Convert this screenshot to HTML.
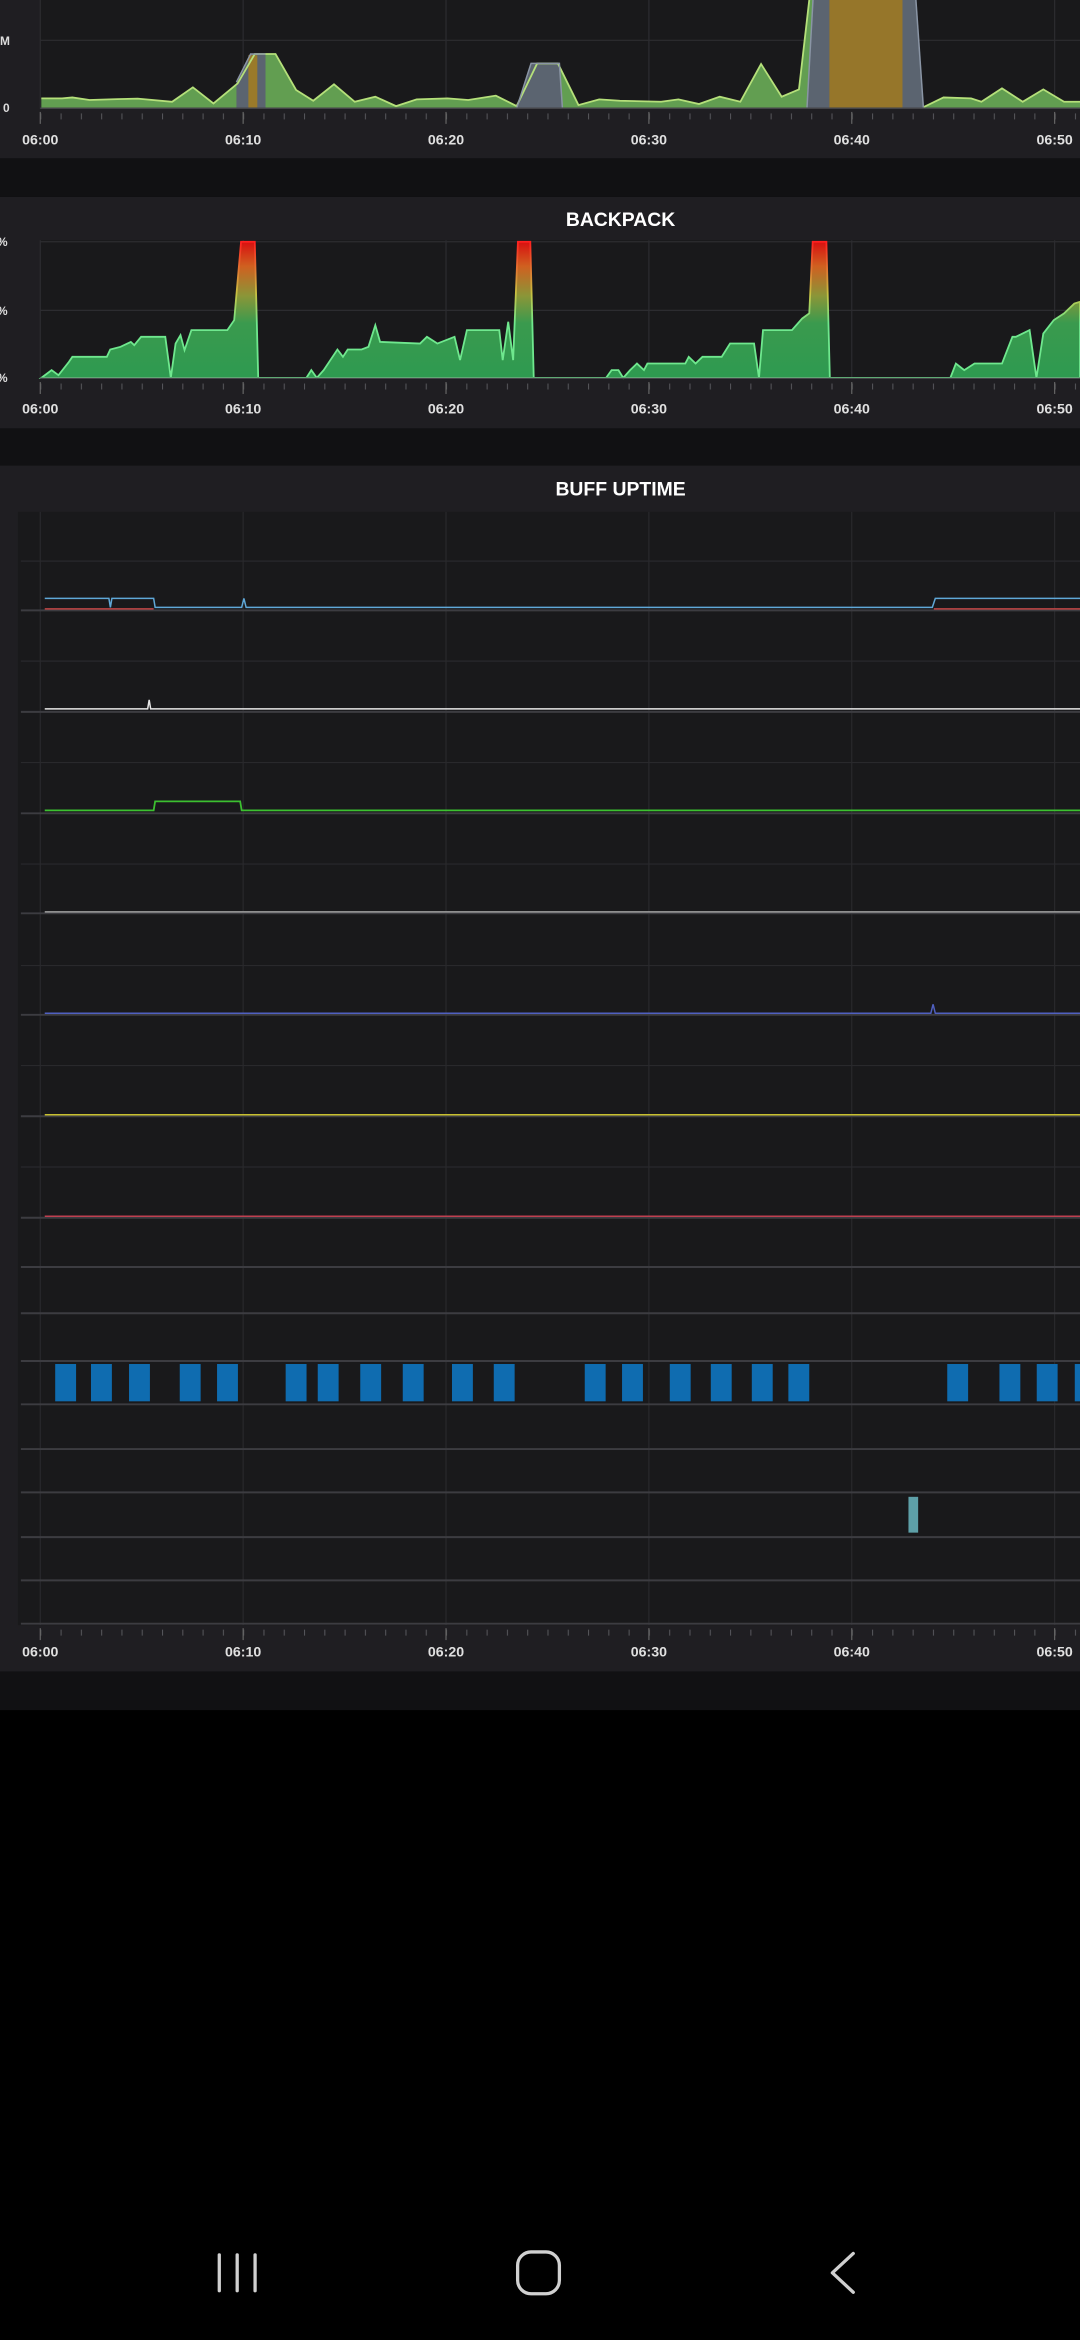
<!DOCTYPE html>
<html><head><meta charset="utf-8"><style>
html,body{margin:0;padding:0;background:#000;width:1080px;height:2340px;overflow:hidden}
svg{display:block}
text{font-family:"Liberation Sans",sans-serif;font-weight:bold}
</style></head><body>
<svg width="1080" height="2340" viewBox="0 0 724 1568" preserveAspectRatio="none" xmlns="http://www.w3.org/2000/svg">
<defs>
<pattern id="tk" x="27" y="0" width="13.6" height="2000" patternUnits="userSpaceOnUse"><rect x="0" y="0" width="0.7" height="2000" fill="#55555a"/></pattern>
<linearGradient id="bf" gradientUnits="userSpaceOnUse" x1="0" y1="253" x2="0" y2="162">
<stop offset="0" stop-color="#2e9a50"/><stop offset="0.4" stop-color="#3a9a4e"/><stop offset="0.6" stop-color="#8a9638"/><stop offset="0.82" stop-color="#d06020"/><stop offset="1" stop-color="#d81010"/></linearGradient>
<linearGradient id="bl" gradientUnits="userSpaceOnUse" x1="0" y1="253" x2="0" y2="162">
<stop offset="0" stop-color="#6fe88e"/><stop offset="0.4" stop-color="#6fe88e"/><stop offset="0.62" stop-color="#c8c040"/><stop offset="1" stop-color="#ff2020"/></linearGradient>
</defs>
<rect x="0" y="0" width="724" height="1568" fill="#000"/>
<rect x="0" y="0" width="724" height="1146" fill="#111113"/>
<!-- top panel -->
<rect x="0" y="0" width="724" height="106" fill="#1f1e22"/>
<rect x="27" y="0" width="697" height="73" fill="#19191b"/>
<g stroke="#2c2c30" stroke-width="0.8">
<line x1="27" y1="27" x2="724" y2="27"/>
<line x1="27" y1="0" x2="27" y2="73"/><line x1="163" y1="0" x2="163" y2="73"/><line x1="299" y1="0" x2="299" y2="73"/><line x1="435" y1="0" x2="435" y2="73"/><line x1="571" y1="0" x2="571" y2="73"/><line x1="707" y1="0" x2="707" y2="73"/>
</g>
<polygon fill="#629e51" points="27.7,72 27.7,65.9 41.6,65.9 48.5,65.3 60,67 78.5,66.4 92.3,66.1 115.4,68.2 129.3,58.5 143.1,69.3 159.3,55.9 170.8,36.2 184.7,36.2 198.5,60.3 210,67.5 223.9,56.5 237.8,68.2 251.6,64.8 265.5,71.1 279.3,66.6 300,65.9 313.9,67 332.4,64.1 346.3,71.1 360.1,42.5 374,42.5 387.8,70.4 401.7,66.6 415.5,67.5 443.2,68.2 454.8,66.6 468.6,69.7 482.5,64.8 496.3,68.2 510.2,42.9 524,64.8 535.6,59.9 542.5,0 604.8,0 618.7,72 632.5,65.3 651,65.9 657.9,68.2 671.7,59.2 685.6,68.2 699.4,59.9 713.3,68.2 724,68.2 724,72"/>
<polygon fill="#5b6470" points="158.5,72 158.5,55 168,36.2 178,36.2 178,72"/>
<rect x="166.5" y="37" width="6" height="35" fill="#9a7a2a"/>
<polygon fill="#5b6470" points="346.5,72 356,42.5 375,42.5 377,72"/>
<polygon fill="#5b6470" points="541,72 545,0 614,0 619,72"/>
<rect x="556" y="0" width="49" height="72" fill="#96762a"/>
<polyline fill="none" stroke="#b5e07a" stroke-width="1.2" points="27.7,65.9 41.6,65.9 48.5,65.3 60,67 78.5,66.4 92.3,66.1 115.4,68.2 129.3,58.5 143.1,69.3 159.3,55.9 170.8,36.2 184.7,36.2 198.5,60.3 210,67.5 223.9,56.5 237.8,68.2 251.6,64.8 265.5,71.1 279.3,66.6 300,65.9 313.9,67 332.4,64.1 346.3,71.1 360.1,42.5 374,42.5 387.8,70.4 401.7,66.6 415.5,67.5 443.2,68.2 454.8,66.6 468.6,69.7 482.5,64.8 496.3,68.2 510.2,42.9 524,64.8 535.6,59.9 542.5,0"/>
<polyline fill="none" stroke="#b5e07a" stroke-width="1.2" points="618.7,72 632.5,65.3 651,65.9 657.9,68.2 671.7,59.2 685.6,68.2 699.4,59.9 713.3,68.2 724,68.2"/>
<polyline fill="none" stroke="#8a95a5" stroke-width="1" points="158.5,55 168,36.2 178,36.2"/>
<polyline fill="none" stroke="#8a95a5" stroke-width="1" points="346.5,72 356,42.5 375,42.5 377,72"/>
<polyline fill="none" stroke="#8a95a5" stroke-width="1" points="541,72 545,0"/><polyline fill="none" stroke="#8a95a5" stroke-width="1" points="614,0 619,72"/>
<line x1="27" y1="72.5" x2="724" y2="72.5" stroke="#444448" stroke-width="1"/>
<rect x="27" y="76" width="697" height="4" fill="url(#tk)"/>
<g stroke="#666" stroke-width="0.8"><line x1="27" y1="75" x2="27" y2="83"/><line x1="163" y1="75" x2="163" y2="83"/><line x1="299" y1="75" x2="299" y2="83"/><line x1="435" y1="75" x2="435" y2="83"/><line x1="571" y1="75" x2="571" y2="83"/><line x1="707" y1="75" x2="707" y2="83"/></g>
<text x="0" y="30" font-size="8" fill="#ddd">M</text>
<text x="2" y="75" font-size="8" fill="#ddd">0</text>
<g font-size="9.5" fill="#e0e0e0" text-anchor="middle"><text x="27" y="97">06:00</text><text x="163" y="97">06:10</text><text x="299" y="97">06:20</text><text x="435" y="97">06:30</text><text x="571" y="97">06:40</text><text x="707" y="97">06:50</text></g>
<!-- backpack -->
<rect x="0" y="132" width="724" height="155" fill="#1f1e22"/>
<rect x="27" y="161" width="697" height="93" fill="#19191b"/>
<text x="416" y="151.5" font-size="13" fill="#fff" text-anchor="middle">BACKPACK</text>
<g stroke="#2c2c30" stroke-width="0.8">
<line x1="27" y1="162" x2="724" y2="162"/><line x1="27" y1="208" x2="724" y2="208"/>
<line x1="27" y1="161" x2="27" y2="254"/><line x1="163" y1="161" x2="163" y2="254"/><line x1="299" y1="161" x2="299" y2="254"/><line x1="435" y1="161" x2="435" y2="254"/><line x1="571" y1="161" x2="571" y2="254"/><line x1="707" y1="161" x2="707" y2="254"/>
</g>
<polygon fill="url(#bf)" stroke="url(#bl)" stroke-width="1.2" points="27.7,253.2 34.6,248 39.2,251.4 46.2,242.5 48.5,239.1 71.6,239.1 73.9,234.2 80.8,232.4 87.7,229.1 90,231.3 94.6,225.7 110.8,225.7 114.5,253.2 117.7,230.2 121,224.6 123.7,234.6 128.3,221.2 152.4,221.2 157,214.5 161.6,162 170.8,162 173.1,253.2 205.4,253.2 208.7,248 212.4,253.2 217,248 226.2,234.2 229.9,239.1 233.1,234.2 242.4,234.2 247,232.4 251.6,217.9 254.8,229.1 281.6,230.2 286.2,225.7 293.2,230.2 304.7,225.7 308.4,241.3 313,221.2 334.7,221.2 337,241.3 340.7,215.6 344,241.3 347.2,162 355.5,162 357.8,253.2 406.3,253.2 410,248 414.6,248 417.8,253.2 422.4,248 427,243.6 431.7,248 434,243.6 459.4,243.6 461.7,239.1 466.3,243.6 470.9,239.1 483.8,239.1 489.4,230.2 505.5,230.2 508.8,253.2 511.5,221.2 530.9,221.2 537.8,213.4 542.5,210 544.8,162 554,162 556.3,253.2 637.1,253.2 640.8,243.6 646.4,248 653.3,243.6 671.7,243.6 678.7,225.7 681,225.7 690.2,221.2 694.8,253.2 699.4,223.5 706.4,214.5 713.3,210 720.2,203.4 724,202.2 724,253.2"/>
<line x1="27" y1="253.5" x2="724" y2="253.5" stroke="#444448" stroke-width="1"/>
<rect x="27" y="257" width="697" height="4" fill="url(#tk)"/>
<g stroke="#666" stroke-width="0.8"><line x1="27" y1="256" x2="27" y2="264"/><line x1="163" y1="256" x2="163" y2="264"/><line x1="299" y1="256" x2="299" y2="264"/><line x1="435" y1="256" x2="435" y2="264"/><line x1="571" y1="256" x2="571" y2="264"/><line x1="707" y1="256" x2="707" y2="264"/></g>
<g font-size="8" fill="#ddd"><text x="-2" y="165">%</text><text x="-2" y="211">%</text><text x="-2" y="256">%</text></g>
<g font-size="9.5" fill="#e0e0e0" text-anchor="middle"><text x="27" y="277">06:00</text><text x="163" y="277">06:10</text><text x="299" y="277">06:20</text><text x="435" y="277">06:30</text><text x="571" y="277">06:40</text><text x="707" y="277">06:50</text></g>
<!-- buff uptime -->
<rect x="0" y="312" width="724" height="808" fill="#1f1e22"/>
<rect x="12" y="343" width="712" height="746" fill="#19191b"/>
<text x="416" y="332" font-size="13" fill="#fff" text-anchor="middle">BUFF UPTIME</text>
<g stroke="#29292c" stroke-width="0.8">
<line x1="27" y1="343" x2="27" y2="1089"/><line x1="163" y1="343" x2="163" y2="1089"/><line x1="299" y1="343" x2="299" y2="1089"/><line x1="435" y1="343" x2="435" y2="1089"/><line x1="571" y1="343" x2="571" y2="1089"/><line x1="707" y1="343" x2="707" y2="1089"/>
<line x1="14" y1="376" x2="724" y2="376"/><line x1="14" y1="443" x2="724" y2="443"/><line x1="14" y1="511" x2="724" y2="511"/><line x1="14" y1="579" x2="724" y2="579"/><line x1="14" y1="647" x2="724" y2="647"/><line x1="14" y1="714" x2="724" y2="714"/><line x1="14" y1="782" x2="724" y2="782"/>
</g>
<g stroke="#3c3c41" stroke-width="1.3">
<line x1="14" y1="409" x2="724" y2="409"/><line x1="14" y1="477" x2="724" y2="477"/><line x1="14" y1="545" x2="724" y2="545"/><line x1="14" y1="612" x2="724" y2="612"/><line x1="14" y1="680" x2="724" y2="680"/><line x1="14" y1="748" x2="724" y2="748"/><line x1="14" y1="816" x2="724" y2="816"/><line x1="14" y1="849" x2="724" y2="849"/><line x1="14" y1="880" x2="724" y2="880"/><line x1="14" y1="912" x2="724" y2="912"/><line x1="14" y1="941" x2="724" y2="941"/><line x1="14" y1="971" x2="724" y2="971"/><line x1="14" y1="1000" x2="724" y2="1000"/><line x1="14" y1="1030" x2="724" y2="1030"/><line x1="14" y1="1059" x2="724" y2="1059"/><line x1="14" y1="1088" x2="724" y2="1088"/>
</g>
<g fill="none" stroke-width="1">
<polyline stroke="#c04545" points="30,408 103,408"/><polyline stroke="#c04545" points="626,408 724,408"/>
<polyline stroke="#5fa8d8" points="30,401 73,401 74,407 75,401 103,401 104,407 162,407 163.5,401 165,407 625,407 627,401 724,401"/>
<polyline stroke="#e6e6e6" points="30,475 99,475 100,469 101,475 724,475"/>
<polyline stroke="#3cc030" stroke-width="1.2" points="30,543 103,543 104,537 161,537 162,543 724,543"/>
<polyline stroke="#a0a0a0" points="30,611 724,611"/>
<polyline stroke="#5060c0" points="30,679 624,679 625.5,673 627,679 724,679"/>
<polyline stroke="#c8c030" points="30,747 724,747"/>
<polyline stroke="#c04050" points="30,815 724,815"/>
</g>
<g fill="#0f6cb0">
<rect x="37" y="914" width="14" height="25"/><rect x="61" y="914" width="14" height="25"/><rect x="86.5" y="914" width="14" height="25"/><rect x="120.5" y="914" width="14" height="25"/><rect x="145.5" y="914" width="14" height="25"/><rect x="191.5" y="914" width="14" height="25"/><rect x="213" y="914" width="14" height="25"/><rect x="241.5" y="914" width="14" height="25"/><rect x="270" y="914" width="14" height="25"/><rect x="303" y="914" width="14" height="25"/><rect x="331" y="914" width="14" height="25"/><rect x="392" y="914" width="14" height="25"/><rect x="417" y="914" width="14" height="25"/><rect x="449" y="914" width="14" height="25"/><rect x="476.5" y="914" width="14" height="25"/><rect x="504" y="914" width="14" height="25"/><rect x="528.5" y="914" width="14" height="25"/><rect x="635" y="914" width="14" height="25"/><rect x="670" y="914" width="14" height="25"/><rect x="695" y="914" width="14" height="25"/><rect x="720.5" y="914" width="14" height="25"/>
</g>
<rect x="609" y="1003" width="6.5" height="24" fill="#5ea0a8"/>
<rect x="27" y="1092" width="697" height="4" fill="url(#tk)"/>
<g stroke="#666" stroke-width="0.8"><line x1="27" y1="1091" x2="27" y2="1099"/><line x1="163" y1="1091" x2="163" y2="1099"/><line x1="299" y1="1091" x2="299" y2="1099"/><line x1="435" y1="1091" x2="435" y2="1099"/><line x1="571" y1="1091" x2="571" y2="1099"/><line x1="707" y1="1091" x2="707" y2="1099"/></g>
<g font-size="9.5" fill="#e0e0e0" text-anchor="middle"><text x="27" y="1110">06:00</text><text x="163" y="1110">06:10</text><text x="299" y="1110">06:20</text><text x="435" y="1110">06:30</text><text x="571" y="1110">06:40</text><text x="707" y="1110">06:50</text></g>
<rect x="0" y="1146" width="724" height="422" fill="#000"/>
<!-- nav bar -->
<g stroke="#d0d0d0" stroke-width="2.2" fill="none" stroke-linecap="round" stroke-linejoin="round">
<line x1="147" y1="1511" x2="147" y2="1535"/><line x1="159" y1="1511" x2="159" y2="1535"/><line x1="171" y1="1511" x2="171" y2="1535"/>
<rect x="347" y="1509" width="28" height="28" rx="9"/>
<polyline points="572,1510 558,1523 572,1536"/>
</g>
</svg>
</body></html>
